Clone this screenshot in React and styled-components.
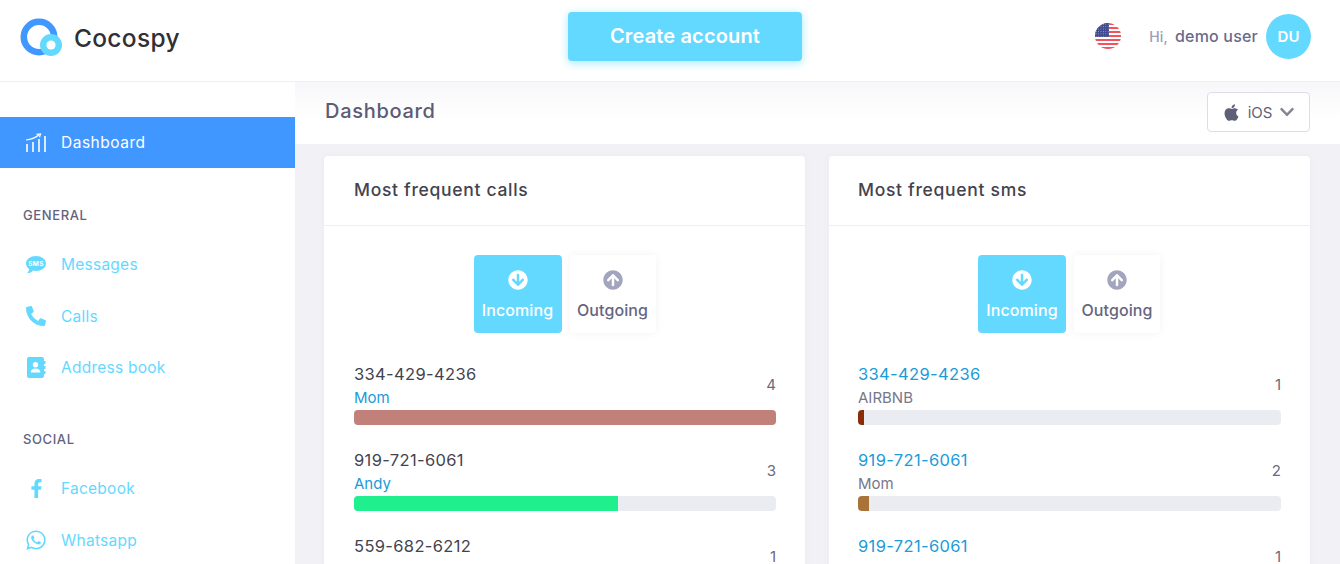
import styled, { createGlobalStyle } from 'styled-components';
import {
  FaApple,
  FaArrowCircleDown,
  FaArrowCircleUp,
  FaChevronDown,
  FaFacebookF,
  FaPhoneAlt,
  FaWhatsapp,
} from 'react-icons/fa';

const GlobalStyle = createGlobalStyle`
  html, body {
    margin: 0;
    height: 100%;
    overflow: hidden;
    background: #fff;
    font-family: Inter, "Open Sans", sans-serif;
  }
  * {
    box-sizing: border-box;
  }
`;

const Page = styled.div`
  width: 1340px;
  height: 564px;
  overflow: hidden;
  display: flex;
  flex-direction: column;
`;

const Header = styled.header`
  height: 82px;
  flex: none;
  display: grid;
  grid-template-columns: 568px 234px 1fr;
  padding-bottom: 1px;
  border-bottom: 1px solid #eeeef3;
`;

const Brand = styled.div`
  display: flex;
  align-items: center;
  gap: 11px;
  padding: 0 0 6px 20px;
`;

const BrandName = styled.span`
  padding-top: 2px;
  font-size: 24.5px;
  font-weight: 500;
  color: #2f2f35;
  letter-spacing: 0.3px;
`;

const CreateButton = styled.button`
  height: 49px;
  margin-top: 12px;
  padding: 0 0 2px;
  border: 0;
  border-radius: 4px;
  background: #64d9ff;
  color: #fff;
  font: 600 20px Inter, sans-serif;
  letter-spacing: 0.15px;
  box-shadow: 0 2px 8px rgba(100, 217, 255, 0.6);
`;

const UserArea = styled.div`
  display: flex;
  align-items: flex-start;
  justify-content: flex-end;
  padding: 14px 29px 0 0;
`;

const Flag = styled.svg`
  width: 26px;
  height: 26px;
  margin: 9px 28px 0 0;
`;

const Greeting = styled.div`
  margin-top: 13px;
  font-size: 16px;
  line-height: 18px;
  font-weight: 500;
  letter-spacing: 0.2px;
  color: #6a6a8c;
  white-space: nowrap;

  span {
    color: #9c9cb5;
    margin-right: 7px;
    font-size: 14px;
  }
`;

const Avatar = styled.div`
  width: 45px;
  height: 45px;
  margin-left: 8px;
  border-radius: 50%;
  background: #64d9ff;
  color: #fff;
  font-size: 15px;
  font-weight: 600;
  display: flex;
  align-items: center;
  justify-content: center;
`;

const Body = styled.div`
  flex: 1;
  display: flex;
  min-height: 0;
`;

const Sidebar = styled.aside`
  width: 295px;
  flex: none;
  padding-top: 35px;
  background: #fff;
`;

const ActiveItem = styled.div`
  height: 51px;
  display: flex;
  align-items: center;
  gap: 14px;
  padding-left: 25px;
  margin-bottom: 38px;
  background: #4097ff;
  color: #fff;
  font-size: 15.5px;
  letter-spacing: 0.5px;
`;

const SectionTitle = styled.div`
  height: 18px;
  margin-left: 23px;
  margin-bottom: 14.8px;
  font-size: 13px;
  line-height: 18px;
  font-weight: 500;
  letter-spacing: 0.6px;
  color: #62627e;
`;

const NavList = styled.div`
  margin-bottom: ${({ $gap }) => $gap || 0}px;
`;

const NavItem = styled.div`
  height: 51.5px;
  display: flex;
  align-items: center;
  gap: 15px;
  padding-left: 26px;
  color: #64d9ff;
  font-size: 15.5px;
  letter-spacing: 0.25px;
`;

const IconSlot = styled.span`
  width: 20px;
  height: 20px;
  flex: none;
  display: flex;
  align-items: center;
  justify-content: center;

  svg {
    display: block;
  }
`;

const Main = styled.main`
  flex: 1;
  background: #f1f1f6;
  min-width: 0;
`;

const TitleBar = styled.div`
  height: 62px;
  padding: 10px 30px 0;
  display: flex;
  justify-content: space-between;
  align-items: flex-start;
  background: linear-gradient(180deg, #f7f7fa 0%, #fff 60%);
`;

const PageTitle = styled.h1`
  margin: 7px 0 0;
  font-size: 20px;
  line-height: 24px;
  font-weight: 500;
  letter-spacing: 0.7px;
  color: #5b5b75;
`;

const PlatformSelect = styled.div`
  width: 103px;
  height: 40px;
  display: flex;
  align-items: center;
  justify-content: center;
  gap: 7px;
  background: #fff;
  border: 1px solid #dddde8;
  border-radius: 4px;
  color: #5f5f78;
  font-size: 15px;
`;

const Cards = styled.div`
  display: grid;
  grid-template-columns: 481px 481px;
  gap: 24px;
  padding: 12px 0 0 29px;
`;

const Card = styled.section`
  height: 420px;
  background: #fff;
  border-radius: 4px;
  box-shadow: 0 0 6px rgba(90, 90, 130, 0.05);
`;

const CardTitle = styled.h2`
  margin: 0;
  height: 70px;
  padding: 0 0 2px ${({ $inset }) => $inset}px;
  display: flex;
  align-items: center;
  border-bottom: 1px solid #eeeef3;
  font-size: 17.5px;
  font-weight: 500;
  letter-spacing: 0.7px;
  color: #43434f;
`;

const Toggle = styled.div`
  display: flex;
  justify-content: center;
  gap: 8px;
  padding: 29px ${({ $inset }) => 30 - $inset}px 29px 0;
`;

const ToggleButton = styled.div`
  width: ${({ $active }) => ($active ? 88 : 86)}px;
  height: 78px;
  padding-top: 15px;
  display: flex;
  flex-direction: column;
  align-items: center;
  gap: 10px;
  border-radius: 4px;
  background: ${({ $active }) => ($active ? '#64d9ff' : '#fff')};
  color: ${({ $active }) => ($active ? '#fff' : '#66667f')};
  box-shadow: ${({ $active }) => ($active ? 'none' : '0 0 8px rgba(90, 90, 130, 0.07)')};
  font-size: 16px;
  font-weight: 500;
  letter-spacing: 0.1px;

  svg {
    color: ${({ $active }) => ($active ? '#fff' : '#a2a5bd')};
  }
`;

const Rows = styled.div`
  padding: 0 29px 0 ${({ $inset }) => $inset}px;
`;

const Row = styled.div`
  height: 86px;
`;

const RowHead = styled.div`
  height: 48px;
  padding-bottom: 2px;
  display: flex;
  justify-content: space-between;
  align-items: center;
`;

const Phone = styled.div`
  font-size: 16.5px;
  line-height: 24px;
  letter-spacing: 0.35px;
  color: ${({ $link }) => ($link ? '#1b9bd7' : '#43434f')};
`;

const Contact = styled.div`
  min-height: 22px;
  margin-top: 1px;
  font-size: 15px;
  line-height: 22px;
  color: ${({ $link }) => ($link ? '#1b9bd7' : '#77778a')};
`;

const Count = styled.div`
  margin-bottom: 2px;
  font-size: 15px;
  color: #6a6a80;
`;

const Track = styled.div`
  height: 15px;
  border-radius: 4px;
  background: #ebecf1;
  overflow: hidden;
`;

const Fill = styled.div`
  height: 100%;
  background: ${({ $color }) => $color};
`;

const SKY = '#64d9ff';

function LogoMark() {
  return (
    <svg width="43" height="38" viewBox="0 0 43 38">
      <circle cx="19" cy="19" r="15.2" fill="none" stroke="#4097ff" strokeWidth="6.6" />
      <circle cx="31" cy="27" r="11" fill={SKY} />
      <circle cx="31" cy="27" r="4.6" fill="#fff" />
    </svg>
  );
}

function USFlag() {
  const stripes = [0, 4, 8, 12, 16, 20, 24];
  return (
    <Flag viewBox="0 0 26 26">
      <defs>
        <clipPath id="flagClip">
          <circle cx="13" cy="13" r="13" />
        </clipPath>
        <pattern id="flagStars" width="2.4" height="2.4" patternUnits="userSpaceOnUse">
          <rect width="2.4" height="2.4" fill="#3f4a8e" />
          <circle cx="1.2" cy="1.2" r="0.5" fill="#aeb4d8" />
        </pattern>
      </defs>
      <g clipPath="url(#flagClip)">
        <rect width="26" height="26" fill="#fff" />
        {stripes.map((y) => (
          <rect key={y} x="0" y={y} width="26" height="2" fill="#f4525f" />
        ))}
        <rect width="14" height="14" fill="url(#flagStars)" />
      </g>
    </Flag>
  );
}

function ChartIcon() {
  return (
    <svg width="22" height="20" viewBox="0 0 22 20" fill="none" stroke="#fff" strokeWidth="1.6">
      <path d="M2 19v-8M8 19v-10M14 19v-13M20 19V3" />
      <path d="M1 7c5-.5 9-2 13-5" strokeWidth="1.2" />
      <path d="M11.5 1.4 15.5 1l-1 3.2" strokeWidth="1.2" />
    </svg>
  );
}

function SmsIcon() {
  return (
    <svg width="20" height="18" viewBox="0 0 20 18">
      <path
        d="M10 0c5.500 0 10 3.300 10 7.500S15.500 15 10 15c-1 0-2-.1-2.900-.4C5.800 16 3.800 17.300 1 17.300c1.200-1.100 2-2.600 2.200-4.200C1.200 11.700 0 9.700 0 7.500 0 3.300 4.500 0 10 0z"
        fill={SKY}
      />
      <text x="10" y="10" textAnchor="middle" fontSize="6.5" fontWeight="700" fill="#fff" fontFamily="Inter, sans-serif">
        SMS
      </text>
    </svg>
  );
}

function BookIcon() {
  return (
    <svg width="19" height="21" viewBox="0 0 19 21">
      <path
        d="M2 0h13a2 2 0 0 1 2 2v2h1.500v3H17v2h1.500v3H17v2h1.500v3H17v2a2 2 0 0 1-2 2H2a2 2 0 0 1-2-2V2a2 2 0 0 1 2-2z"
        fill={SKY}
      />
      <circle cx="8.500" cy="7.800" r="2.700" fill="#fff" />
      <path d="M3.700 15.500c0-2.700 2-4 4.800-4s4.800 1.300 4.800 4z" fill="#fff" />
    </svg>
  );
}

const generalItems = [
  { label: 'Messages', icon: <SmsIcon /> },
  { label: 'Calls', icon: <FaPhoneAlt size={20} /> },
  { label: 'Address book', icon: <BookIcon /> },
];

const socialItems = [
  { label: 'Facebook', icon: <FaFacebookF size={19} /> },
  { label: 'Whatsapp', icon: <FaWhatsapp size={22} /> },
];

const callRows = [
  { phone: '334-429-4236', name: 'Mom', count: 4, width: 100, color: '#c1807a' },
  { phone: '919-721-6061', name: 'Andy', count: 3, width: 62.5, color: '#20ef8e' },
  { phone: '559-682-6212', name: '', count: 1, width: 0, color: '#c1807a' },
];

const smsRows = [
  { phone: '334-429-4236', name: 'AIRBNB', count: 1, width: 1.5, color: '#8a2c08' },
  { phone: '919-721-6061', name: 'Mom', count: 2, width: 2.6, color: '#a97238' },
  { phone: '919-721-6061', name: '', count: 1, width: 0, color: '#8a2c08' },
];

function StatCard({ title, rows, phoneLink, inset }) {
  return (
    <Card>
      <CardTitle $inset={inset}>{title}</CardTitle>
      <Toggle $inset={inset}>
        <ToggleButton $active>
          <FaArrowCircleDown size={20} />
          Incoming
        </ToggleButton>
        <ToggleButton>
          <FaArrowCircleUp size={20} />
          Outgoing
        </ToggleButton>
      </Toggle>
      <Rows $inset={inset}>
        {rows.map((row, index) => (
          <Row key={index}>
            <RowHead>
              <div>
                <Phone $link={phoneLink}>{row.phone}</Phone>
                <Contact $link={!phoneLink}>{row.name}</Contact>
              </div>
              <Count>{row.count}</Count>
            </RowHead>
            <Track>
              <Fill $color={row.color} style={{ width: `${row.width}%` }} />
            </Track>
          </Row>
        ))}
      </Rows>
    </Card>
  );
}

export default function App() {
  return (
    <Page>
      <GlobalStyle />
      <Header>
        <Brand>
          <LogoMark />
          <BrandName>Cocospy</BrandName>
        </Brand>
        <CreateButton>Create account</CreateButton>
        <UserArea>
          <USFlag />
          <Greeting>
            <span>Hi,</span>demo user
          </Greeting>
          <Avatar>DU</Avatar>
        </UserArea>
      </Header>
      <Body>
        <Sidebar>
          <ActiveItem>
            <ChartIcon />
            Dashboard
          </ActiveItem>
          <SectionTitle>GENERAL</SectionTitle>
          <NavList $gap={37}>
            {generalItems.map((item) => (
              <NavItem key={item.label}>
                <IconSlot>{item.icon}</IconSlot>
                {item.label}
              </NavItem>
            ))}
          </NavList>
          <SectionTitle>SOCIAL</SectionTitle>
          <NavList>
            {socialItems.map((item) => (
              <NavItem key={item.label}>
                <IconSlot>{item.icon}</IconSlot>
                {item.label}
              </NavItem>
            ))}
          </NavList>
        </Sidebar>
        <Main>
          <TitleBar>
            <PageTitle>Dashboard</PageTitle>
            <PlatformSelect>
              <FaApple size={19} />
              iOS
              <FaChevronDown size={16} color="#858590" />
            </PlatformSelect>
          </TitleBar>
          <Cards>
            <StatCard title="Most frequent calls" rows={callRows} inset={30} />
            <StatCard title="Most frequent sms" rows={smsRows} inset={29} phoneLink />
          </Cards>
        </Main>
      </Body>
    </Page>
  );
}
